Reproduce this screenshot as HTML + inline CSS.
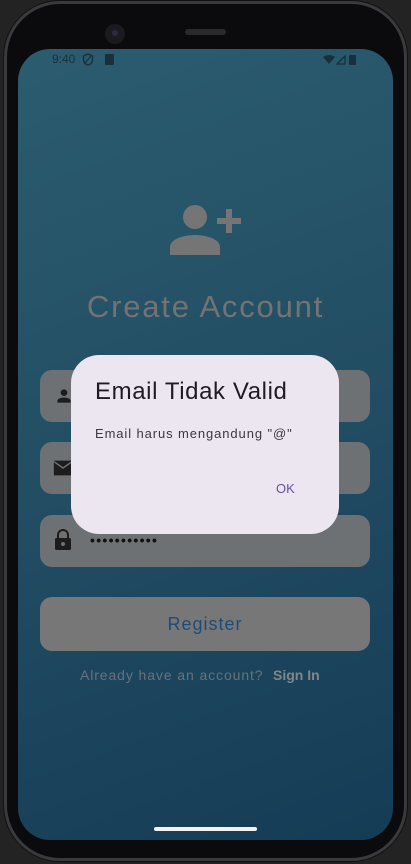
<!DOCTYPE html>
<html><head><meta charset="utf-8"><style>
*{margin:0;padding:0;box-sizing:border-box}
html,body{width:411px;height:864px;overflow:hidden;background:#232323;font-family:"Liberation Sans",sans-serif}
.phone{position:absolute;left:4px;top:1px;width:403px;height:860px;border-radius:56px;background:#0b0b0d;border:3px solid #3a3a3c;box-shadow:0 0 0 1px #111}
.screen{position:absolute;left:18px;top:49px;width:375px;height:791px;border-radius:32px;overflow:hidden;background:linear-gradient(160deg,#2b5c6f 0%,#224d63 50%,#153c56 100%)}
.abs{position:absolute}
.field{position:absolute;left:22px;width:330px;height:52px;border-radius:12px;background:#6e7173}
.dlg{position:absolute;left:53px;top:306px;width:268px;height:179px;border-radius:28px;background:#ece6f1}
</style></head><body>
<div class="phone"></div>
<div class="abs" style="left:105px;top:24px;width:20px;height:20px;border-radius:50%;background:#1b1b1f"></div>
<div class="abs" style="left:112px;top:30px;width:6px;height:6px;border-radius:50%;background:#2a2a4a"></div>
<div class="abs" style="left:185px;top:29px;width:41px;height:6px;border-radius:3px;background:#2a2a2c"></div>
<div class="screen">
  <div class="abs" style="left:34px;top:3px;font-size:12px;color:#1a2f3a">9:40</div>
  <svg class="abs" style="left:64px;top:4px" width="12" height="13" viewBox="0 0 12 13"><path d="M6 1L1.5 3v4c0 2.5 2 4.5 4.5 5 2.5-.5 4.5-2.5 4.5-5V3z" fill="none" stroke="#1a2f3a" stroke-width="1.4"/><path d="M3 10L9 3" stroke="#1a2f3a" stroke-width="1.2"/></svg>
  <div class="abs" style="left:87px;top:5px;width:9px;height:11px;background:#1a2f3a;border-radius:1px"></div>
  <svg class="abs" style="left:305px;top:5px" width="48" height="12" viewBox="0 0 48 12"><path d="M0 3Q6 -1 12 3L6 10z" fill="#1a2f3a"/><path d="M14 10L22 2V10z" fill="none" stroke="#1a2f3a" stroke-width="1.3"/><rect x="26" y="1" width="7" height="10" rx="1" fill="#1a2f3a"/></svg>
  <svg class="abs" style="left:150px;top:152px" width="75" height="58" viewBox="0 0 75 58"><circle cx="27" cy="16" r="12" fill="#757575"/><path d="M2 54V46C2 38 16 34 27 34S52 38 52 46V54z" fill="#757575"/><rect x="58" y="8" width="6" height="24" fill="#757575"/><rect x="49" y="17" width="24" height="6" fill="#757575"/></svg>
  <div class="abs" style="left:0;width:375px;top:240px;text-align:center;font-size:31px;letter-spacing:1.8px;color:#737373">Create Account</div>
  <div class="field" style="top:321px"><svg class="abs" style="left:14px;top:16px" width="20" height="20" viewBox="0 0 24 24"><circle cx="12" cy="8" r="4" fill="#1c1c1c"/><path d="M4 20v-2c0-3 5-4 8-4s8 1 8 4v2z" fill="#1c1c1c"/></svg></div>
  <div class="field" style="top:393px"><svg class="abs" style="left:12px;top:16px" width="22" height="20" viewBox="0 0 24 20"><path d="M2 2h20v16H2z" fill="#1c1c1c"/><path d="M2 3l10 7 10-7" fill="none" stroke="#6e7173" stroke-width="1.6"/></svg></div>
  <div class="field" style="top:466px"><svg class="abs" style="left:14px;top:14px" width="18" height="22" viewBox="0 0 18 22"><path d="M4 9V6a5 5 0 0110 0v3" fill="none" stroke="#1c1c1c" stroke-width="2"/><rect x="1" y="9" width="16" height="12" rx="1.5" fill="#1c1c1c"/><circle cx="9" cy="15" r="2" fill="#6e7173"/></svg><div class="abs" style="left:50px;top:17px;font-size:14px;letter-spacing:1.3px;color:#111;font-weight:bold">•••••••••••</div></div>
  <div class="abs" style="left:22px;top:548px;width:330px;height:54px;border-radius:12px;background:#777;text-align:center;line-height:54px;font-size:18px;letter-spacing:1px;color:#1e4c78">Register</div>
  <div class="abs" style="left:62px;top:618px;font-size:14px;letter-spacing:0.9px;color:#6a7178">Already have an account?</div>
  <div class="abs" style="left:255px;top:618px;font-size:14px;font-weight:bold;color:#838688">Sign In</div>
  <div class="abs" style="left:136px;top:778px;width:103px;height:4px;border-radius:2px;background:#f2f2f2"></div>
  <div class="dlg">
    <div class="abs" style="left:24px;top:23px;font-size:24px;letter-spacing:0.6px;color:#1e1b22">Email Tidak Valid</div>
    <div class="abs" style="left:24px;top:71px;font-size:13px;letter-spacing:0.9px;color:#3b3840">Email harus mengandung "@"</div>
    <div class="abs" style="left:205px;top:126px;font-size:13px;color:#6650a4">OK</div>
  </div>
</div>
</body></html>
